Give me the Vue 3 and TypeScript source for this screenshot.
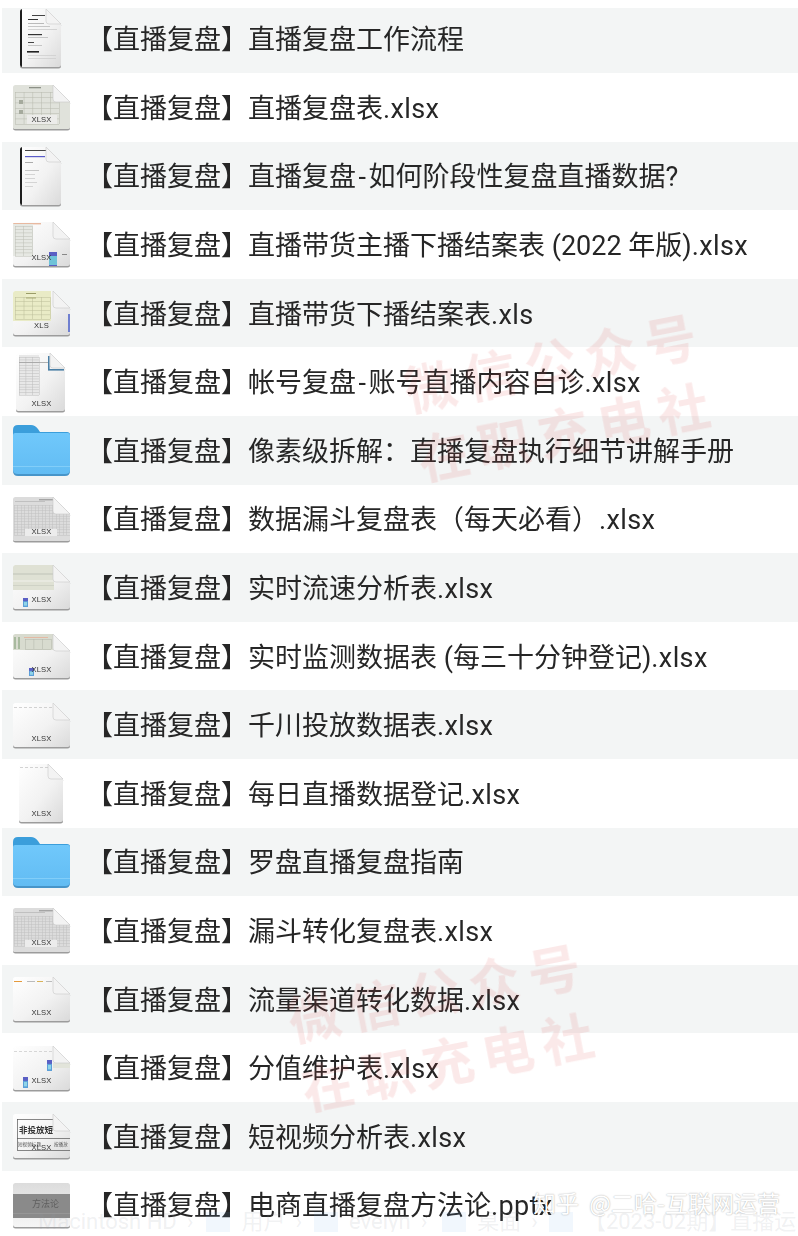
<script setup lang="ts">
type Mark = { x: number; y: number; w: number; h: number; fill: string };
type Note = { x: number; y: number; size: number; text: string; fill: string; weight?: number };
type Shape = 'wide' | 'tall' | 'port' | 'narrow' | 'folder' | 'slide';
type Row = { name: string; shape: Shape; label?: string; labelY?: number; marks?: Mark[]; notes?: Note[] };

const box: Record<string, [number, number, number, number, number]> = {
  wide: [-28, 29, -22, 22, 17],
  tall: [-21, 20, -29, 29, 15],
  port: [-25, 24, -29, 29, 15],
  narrow: [-22, 22, -29, 29, 15],
  slide: [-28, 29, -22, 22, 0],
};

const pagePath = (s: Shape) => {
  const [a, b, c, d, f] = box[s];
  const k = 2.5;
  return `M${a + k} ${c}H${b - Math.max(f, k)}${f ? `L${b} ${c + f}` : `Q${b} ${c} ${b} ${c + k}`}V${d - k}Q${b} ${d} ${b - k} ${d}H${a + k}Q${a} ${d} ${a} ${d - k}V${c + k}Q${a} ${c} ${a + k} ${c}Z`;
};
const foldPath = (s: Shape) => {
  const [, b, c, , f] = box[s];
  return `M${b - f} ${c}V${c + f - 3}Q${b - f} ${c + f} ${b - f + 3} ${c + f}H${b}Z`;
};

// hyphen and file extension run wider in the reference than in any installed latin font
const parts = (name: string) => name.split(/(-|\.[a-z]+$)/).filter(Boolean);
const partClass = (p: string) => (p === '-' ? 'hyphen' : p.startsWith('.') ? 'ext' : '');

const m = (x: number, y: number, w: number, h: number, fill: string): Mark => ({ x, y, w, h, fill });
const sheet = (x: number, y: number, w: number, h: number, cols: number, rows: number, c: string) => {
  const out: Mark[] = [];
  for (let i = 0; i <= cols; i++) out.push(m(x + (w / cols) * i, y, 0.5, h, c));
  for (let i = 0; i <= rows; i++) out.push(m(x, y + (h / rows) * i, w, 0.5, c));
  return out;
};
const dashes = (x: number, y: number, w: number, c: string) => {
  const out: Mark[] = [];
  for (let i = x; i < x + w; i += 5) out.push(m(i, y, 3, 0.7, c));
  return out;
};
const phone = (x: number, y: number, h: number) => [m(x, y, 5, h, '#5b9fd8'), m(x, y, 5, h * 0.35, '#5a5fc4'), m(x + 1, y + h * 0.45, 3, h * 0.4, '#8fd4e8')];

const denseSheet = [
  m(-28, -22, 57, 44, '#dcdcdc'),
  ...sheet(-27, -14, 56, 30, 16, 11, '#c0c0c0'),
  m(-2, -20, 14, 1.4, '#a4a4a4'),
  m(-26, -18, 30, 0.7, '#b4b4b4'),
  m(-16, 10, 32, 7, '#ececec'),
];

const prefix = '【直播复盘】';
const rows: Row[] = [
  {
    name: '直播复盘工作流程',
    shape: 'tall',
    marks: [
      m(-21, -29, 2, 58, '#1d1d1d'),
      m(-9, -23, 13, 1, '#444'),
      m(-13, -19, 10, 1, '#333'),
      m(-13, -15, 16, 0.8, '#aaa'),
      m(-13, -12, 22, 0.8, '#bbb'),
      m(-13, -9, 29, 0.8, '#ccc'),
      m(-13, -4, 14, 1.2, '#333'),
      m(-13, -1, 20, 0.8, '#bbb'),
      m(-13, 4, 6, 1, '#444'),
      m(-13, 7, 14, 0.8, '#bbb'),
      m(-14, 13, 12, 1.6, '#222'),
      m(-13, 17, 28, 0.7, '#ccc'),
      m(-13, 20, 28, 0.7, '#ccc'),
    ],
  },
  {
    name: '直播复盘表.xlsx',
    shape: 'wide',
    label: 'XLSX',
    labelY: 15,
    marks: [
      m(-28, -22, 57, 44, '#e0e2db'),
      ...sheet(-26, -15, 44, 32, 5, 6, '#b6b9ad'),
      m(-12, -20, 12, 1.3, '#8d9187'),
      m(-22, -7, 4, 4, '#a5aa9d'),
      m(-22, 3, 4, 4, '#a5aa9d'),
      m(-14, 8, 30, 9, '#ececea'),
    ],
  },
  {
    name: '直播复盘-如何阶段性复盘直播数据?',
    shape: 'tall',
    marks: [
      m(-21, -29, 2, 58, '#1d1d1d'),
      m(-16, -26, 22, 1, '#444'),
      m(-16, -20, 20, 1.2, '#5a5cc8'),
      m(-16, -14, 8, 0.8, '#999'),
      m(-16, -6, 14, 0.8, '#bbb'),
      m(-16, -2, 10, 0.8, '#ccc'),
      m(-16, 2, 10, 0.8, '#ccc'),
      m(-16, 6, 12, 0.8, '#ccc'),
      m(-16, 10, 8, 0.8, '#ccc'),
      m(8, -26, 6, 1, '#dfe08a'),
    ],
  },
  {
    name: '直播带货主播下播结案表 (2022 年版).xlsx',
    shape: 'wide',
    label: 'XLSX',
    labelY: 16,
    marks: [
      m(-28, -21, 28, 1.4, '#e8b9a0'),
      m(-28, -20, 20, 32, '#e6e8e3'),
      ...sheet(-26, -18, 17, 30, 2, 9, '#bcbfb5'),
      m(8, 8, 8, 14, '#5a5fc4'),
      m(8, 12, 8, 9, '#6fc3d8'),
      m(21, 10, 5, 1, '#888'),
    ],
  },
  {
    name: '直播带货下播结案表.xls',
    shape: 'wide',
    label: 'XLS',
    labelY: 15,
    marks: [
      m(-28, -22, 38, 30, '#e9ebc6'),
      ...sheet(-26, -16, 35, 22, 4, 5, '#babc98'),
      m(-15, -20, 10, 5, '#eef0cc'),
      m(-15, -20, 10, 0.8, '#85874f'),
      m(-15, -15.5, 10, 0.8, '#85874f'),
      m(27, 1, 2, 18, '#6f7fd0'),
    ],
  },
  {
    name: '帐号复盘-账号直播内容自诊.xlsx',
    shape: 'port',
    label: 'XLSX',
    labelY: 24,
    marks: [
      m(-22, -27, 20, 40, '#e8e8e8'),
      ...sheet(-22, -25, 20, 38, 3, 14, '#bdbdbd'),
      m(-22, -20, 30, 0.8, '#a0a0a0'),
      m(7, -26, 1.6, 13, '#4a7fa5'),
      m(7, -13, 16, 1.6, '#4a7fa5'),
    ],
  },
  { name: '像素级拆解：直播复盘执行细节讲解手册', shape: 'folder' },
  { name: '数据漏斗复盘表（每天必看）.xlsx', shape: 'wide', label: 'XLSX', labelY: 15, marks: denseSheet },
  {
    name: '实时流速分析表.xlsx',
    shape: 'wide',
    label: 'XLSX',
    labelY: 15,
    marks: [
      m(-28, -22, 41, 25, '#dfe1d4'),
      m(-28, -14, 41, 2, '#cfd2c6'),
      m(-28, -7, 41, 2, '#e8e9e0'),
      m(-28, -2, 41, 1, '#cfd2c6'),
      ...phone(-18, 11, 9),
    ],
  },
  {
    name: '实时监测数据表 (每三十分钟登记).xlsx',
    shape: 'wide',
    label: 'XLSX',
    labelY: 16,
    marks: [
      m(-28, -22, 40, 16, '#d8dbcf'),
      m(-27, -19, 2, 12, '#a9ba9f'),
      m(-23, -19, 2, 12, '#a9ba9f'),
      m(-17, -19, 24, 1, '#e3b9a4'),
      ...sheet(-16, -17, 26, 10, 3, 1, '#b2b5a9'),
      ...phone(-12, 12, 8),
    ],
  },
  { name: '千川投放数据表.xlsx', shape: 'wide', label: 'XLSX', labelY: 16, marks: dashes(-27, -18, 40, '#c0c0c0') },
  { name: '每日直播数据登记.xlsx', shape: 'narrow', label: 'XLSX', labelY: 23, marks: dashes(-21, -26, 26, '#c0c0c0') },
  { name: '罗盘直播复盘指南', shape: 'folder' },
  { name: '漏斗转化复盘表.xlsx', shape: 'wide', label: 'XLSX', labelY: 15, marks: denseSheet },
  {
    name: '流量渠道转化数据.xlsx',
    shape: 'wide',
    label: 'XLSX',
    labelY: 16,
    marks: [m(-27, -18, 8, 1, '#e59a3c'), m(-14, -18, 8, 1, '#bbb'), m(-4, -18, 6, 1, '#d9b25a'), m(5, -18, 6, 1, '#bbb')],
  },
  {
    name: '分值维护表.xlsx',
    shape: 'wide',
    label: 'XLSX',
    labelY: 15,
    marks: [
      ...dashes(-27, -17, 40, '#c8c8c8'),
      m(12, -5, 17, 5, '#e2e4da'),
      ...phone(6, -8, 11),
      ...phone(-18, 9, 11),
    ],
  },
  {
    name: '短视频分析表.xlsx',
    shape: 'wide',
    label: 'XLSX',
    labelY: 14,
    marks: [
      m(-24, -17, 53, 0.7, '#555'),
      m(-24, -17, 0.7, 31, '#555'),
      m(-24, 14, 53, 0.7, '#555'),
      m(-24, 2, 53, 0.7, '#555'),
    ],
    notes: [
      { x: -22, y: -3, size: 8.5, text: '非投放短', fill: '#333', weight: 700 },
      { x: -23, y: 10, size: 4.6, text: '短视频标题', fill: '#555' },
      { x: 13, y: 10, size: 4.6, text: '按播放', fill: '#555' },
    ],
  },
  {
    name: '电商直播复盘方法论.pptx',
    shape: 'slide',
    marks: [m(-28, -11, 57, 24, '#8a8a8a'), m(-28, 8, 57, 0.7, '#9b9b9b')],
    notes: [{ x: -9, y: 2, size: 9, text: '方法论', fill: '#5f5f5f' }],
  },
];
</script>

<template>
  <div class="page">
    <svg class="defs" width="0" height="0" aria-hidden="true">
      <defs>
        <linearGradient id="paper" x1="0" y1="0" x2="1" y2="1">
          <stop offset="0" stop-color="#ffffff" />
          <stop offset="0.55" stop-color="#f2f2f2" />
          <stop offset="1" stop-color="#dadada" />
        </linearGradient>
        <linearGradient id="slideTop" x1="0" y1="0" x2="0" y2="1">
          <stop offset="0" stop-color="#dcdcdc" />
          <stop offset="1" stop-color="#f6f6f6" />
        </linearGradient>
        <linearGradient id="folderBody" x1="0" y1="0" x2="0" y2="1">
          <stop offset="0" stop-color="#70c8fb" />
          <stop offset="1" stop-color="#62bcf3" />
        </linearGradient>
      </defs>
    </svg>

    <div v-for="(row, i) in rows" :key="i" class="row">
      <svg class="icon" viewBox="-36 -32 72 64" width="72" height="64">
        <template v-if="row.shape === 'folder'">
          <path d="M-28 -20Q-28 -25 -23 -25H-10Q-6 -25 -3 -21L-1 -18H26Q29 -18 29 -15V-10H-28Z" fill="#3b9edb" />
          <path d="M-28 -15Q-28 -17 -26 -17H27Q29 -17 29 -15V21Q29 26 24 26H-23Q-28 26 -28 21Z" fill="#4795c9" />
          <path d="M-28 -15Q-28 -17 -26 -17H27Q29 -17 29 -15V20Q29 24 24 24H-23Q-28 24 -28 20Z" fill="url(#folderBody)" />
          <rect x="-28" y="16" width="57" height="0.8" fill="#8ad2fb" />
        </template>
        <template v-else>
          <path :d="pagePath(row.shape)" fill="#9c9c9c" transform="translate(0 1.4)" />
          <path :d="pagePath(row.shape)" :fill="row.shape === 'slide' ? 'url(#slideTop)' : 'url(#paper)'" />
          <clipPath :id="`page-${i}`">
            <path :d="pagePath(row.shape)" />
          </clipPath>
          <g :clip-path="`url(#page-${i})`">
            <rect v-for="(k, j) in row.marks" :key="j" :x="k.x" :y="k.y" :width="k.w" :height="k.h" :fill="k.fill" />
          </g>
          <path v-if="row.shape !== 'slide'" :d="foldPath(row.shape)" fill="#f3f3f3" stroke="#cacaca" stroke-width="0.6" />
          <text
            v-for="(n, j) in row.notes"
            :key="`n${j}`"
            class="note"
            :x="n.x"
            :y="n.y"
            :font-size="n.size"
            :font-weight="n.weight ?? 400"
            :fill="n.fill"
          >{{ n.text }}</text>
          <text v-if="row.label" class="label" x="0.5" :y="row.labelY" text-anchor="middle">{{ row.label }}</text>
        </template>
      </svg>
      <span class="name">{{ prefix }}<span v-for="(p, j) in parts(row.name)" :key="j" :class="partClass(p)">{{ p }}</span></span>
    </div>

    <div class="stamp stamp-a">
      <span>微信公众号</span>
      <span>在职充电社</span>
    </div>
    <div class="stamp stamp-b">
      <span>微信公众号</span>
      <span>在职充电社</span>
    </div>

    <div class="crumbs">
      <span class="crumb-text first">Macintosh HD</span><span class="sep">›</span>
      <i class="f1"></i><span class="crumb-text">用户</span><span class="sep">›</span>
      <i class="f2"></i><span class="crumb-text">evelyn</span><span class="sep">›</span>
      <i class="f3"></i><span class="crumb-text">桌面</span><span class="sep">›</span>
      <i class="f4"></i><span class="crumb-text">【2023-02期】直播运</span>
    </div>

    <div class="zhihu">知乎 @二哈-互联网运营</div>
  </div>
</template>

<style>
html,
body {
  margin: 0;
  background: #fff;
}
</style>

<style scoped>
.page {
  position: relative;
  width: 798px;
  height: 1236px;
  padding-top: 8px;
  box-sizing: border-box;
  overflow: hidden;
  background: #fff;
  font-family: Roboto, "Noto Sans CJK SC", sans-serif;
}

.defs {
  display: block;
}

.row {
  display: flex;
  align-items: center;
  gap: 9px;
  height: 68.6px;
  margin-left: 2px;
  padding-left: 3px;
  box-sizing: border-box;
}

.row:first-of-type {
  height: 65px;
  padding-bottom: 5px;
}

.row:nth-of-type(odd) {
  background: #f3f5f5;
}

.icon {
  flex: none;
  overflow: visible;
  filter: blur(0.5px);
}

.label {
  font-family: "Liberation Sans", sans-serif;
  font-size: 7.6px;
  letter-spacing: 0.2px;
  fill: #333;
}

.note {
  font-family: "Noto Sans CJK SC", sans-serif;
}

.name {
  margin-top: 3px;
  font-size: 27px;
  line-height: 36px;
  color: #262626;
  white-space: nowrap;
  filter: blur(0.25px);
}

.hyphen {
  padding: 0 2.5px;
}

.ext {
  letter-spacing: 0.4px;
}

.stamp {
  position: absolute;
  display: flex;
  flex-direction: column;
  align-items: center;
  width: 340px;
  font-family: "Noto Sans CJK SC", sans-serif;
  font-size: 52px;
  font-weight: 700;
  line-height: 70px;
  letter-spacing: 9px;
  color: rgba(226, 70, 70, 0.12);
  transform: rotate(-11deg);
  filter: blur(0.6px);
  pointer-events: none;
}

.stamp-a {
  left: 391px;
  top: 325px;
}

.stamp-b {
  left: 275px;
  top: 955px;
}

.crumbs {
  position: absolute;
  left: 0;
  right: 0;
  top: 1212px;
  height: 20px;
  display: flex;
  align-items: center;
  overflow: hidden;
  white-space: nowrap;
  font-size: 22px;
  line-height: 20px;
  color: rgba(150, 156, 165, 0.15);
  pointer-events: none;
}

.crumbs i {
  flex: none;
  width: 24px;
  height: 20px;
  margin-right: 11px;
  background: rgba(120, 180, 235, 0.1);
}

.crumbs .f1 {
  margin-left: 13px;
}

.crumbs .f2 {
  margin-left: 12px;
}

.crumbs .f3 {
  margin-left: 15px;
}

.crumbs .f4 {
  margin-left: 11px;
}

.crumb-text.first {
  margin-left: 38px;
}

.sep {
  margin-left: 10px;
}

.zhihu {
  position: absolute;
  left: 533px;
  top: 1187px;
  font-family: "Noto Sans CJK SC", sans-serif;
  font-size: 23px;
  line-height: 30px;
  word-spacing: 5px;
  color: #fff;
  white-space: nowrap;
  text-shadow: 0 0 1.5px rgba(0, 0, 0, 0.4);
  pointer-events: none;
}
</style>
